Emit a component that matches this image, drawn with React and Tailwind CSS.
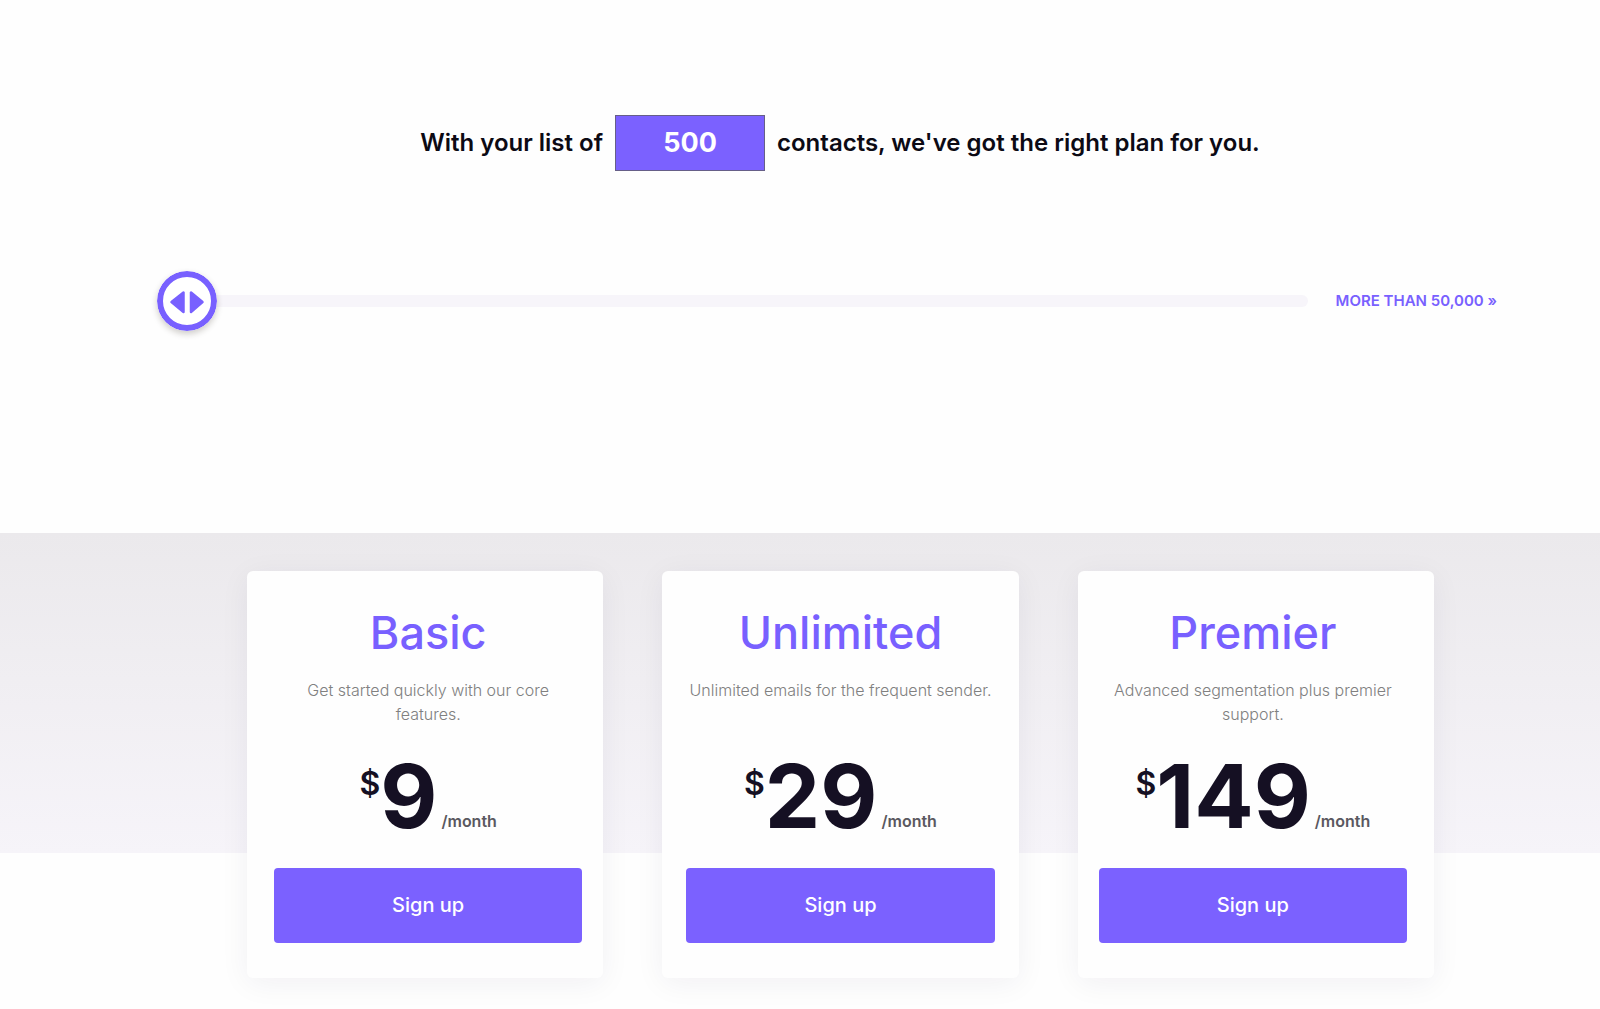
import { useState } from 'react'
import clsx from 'clsx'

const MIN = 500
const MAX = 50000

const plans = [
    { name: 'Basic', text: 'Get started quickly with our core features.', price: 9, pad: 'pl-[27px] pr-[21px]' },
    { name: 'Unlimited', text: 'Unlimited emails for the frequent sender.', price: 29, pad: 'px-6' },
    { name: 'Premier', text: 'Advanced segmentation plus premier support.', price: 149, pad: 'pl-[21px] pr-[27px]' },
]

const ContactSlider = ({ value, onChange }) => {
    const ratio = (Math.min(Math.max(value, MIN), MAX) - MIN) / (MAX - MIN)

    return (
        <div className="relative flex h-[60px] flex-1 items-center">
            <div className="ml-8 h-3 w-full rounded-full bg-[#f7f5fa]"></div>
            <input
                type="range"
                min={MIN}
                max={MAX}
                step={500}
                value={value}
                onChange={(e) => onChange(Number(e.target.value))}
                aria-label="Number of contacts"
                className="absolute inset-0 h-full w-full cursor-pointer opacity-0"
            />
            {/* drawn thumb, follows the range input underneath */}
            <svg
                viewBox="0 0 60 60"
                className="pointer-events-none absolute h-[60px] w-[60px] rounded-full shadow-[0_3px_6px_rgba(40,30,20,0.22)]"
                style={{ left: `calc((100% - 60px) * ${ratio})` }}
                aria-hidden="true"
            >
                <circle cx="30" cy="30" r="27" fill="#fff" stroke="#7860ff" strokeWidth="6" />
                <path d="M14.5 31 26.5 21.5V41Z" fill="#7860ff" stroke="#7860ff" strokeWidth="2.5" strokeLinejoin="round" />
                <path d="M45.5 31 34 21.5V41Z" fill="#7860ff" stroke="#7860ff" strokeWidth="2.5" strokeLinejoin="round" />
            </svg>
        </div>
    )
}

const PlanCard = ({ plan }) => {
    return (
        <article className={clsx('rounded-md bg-[#fefefe] pt-8 pb-[35px] text-center shadow-[0_5px_30px_rgba(40,25,70,0.06)]', plan.pad)}>
            <h2 className="text-[45px] leading-[60px] font-medium text-[#7860ff]">{plan.name}</h2>
            <p className="mt-[15px] h-[48px] text-base leading-6 font-light text-[#808080]">{plan.text}</p>
            <p className="mt-[26px] flex h-[88px] items-start justify-center leading-none font-bold text-[#151023]">
                <span className="pt-4 text-[32px] font-semibold">$</span>
                <span className="text-[88px]">{plan.price}</span>
                <span className="ml-1 self-end pb-[7px] text-base font-semibold text-[#5a5860]">/month</span>
            </p>
            <button type="button" className="mt-7 h-[75px] w-full cursor-pointer rounded-sm bg-[#7b61ff] pb-0.5 text-xl font-medium text-white">
                Sign up
            </button>
        </article>
    )
}

const App = () => {
    const [contacts, setContacts] = useState(MIN)

    const handleContacts = (e) => {
        setContacts(Number(e.target.value.replace(/\D/g, '')))
    }

    return (
        <main className="min-h-screen bg-[#fefefe] font-['Inter',sans-serif]">
            <section className="pt-[115px] pb-[202px]">
                <div className="flex items-center justify-center gap-3 pl-20 text-2xl font-semibold text-[#0c0a14]">
                    <label htmlFor="contacts">With your list of</label>
                    <input
                        id="contacts"
                        type="text"
                        inputMode="numeric"
                        value={contacts}
                        onChange={handleContacts}
                        className="h-14 w-[150px] border border-[#665f88] bg-[#7b61ff] pb-0.5 text-center text-[27px] font-bold text-white"
                    />
                    <span>contacts, we've got the right plan for you.</span>
                </div>
                <div className="mt-[100px] flex items-center gap-7 pr-[103px] pl-[157px]">
                    <ContactSlider value={contacts} onChange={setContacts} />
                    <a href="#more" className="text-[15px] font-semibold whitespace-nowrap text-[#7860ff]">MORE THAN 50,000 »</a>
                </div>
            </section>
            <section className="bg-[linear-gradient(#ebe9ec,#f6f4f9)] bg-[length:100%_320px] bg-no-repeat pt-[38px] pr-[166px] pb-[30px] pl-[247px]">
                <div className="grid grid-cols-3 gap-[59px]">
                    {plans.map((plan) => (
                        <PlanCard key={plan.name} plan={plan} />
                    ))}
                </div>
            </section>
        </main>
    )
}

export default App
